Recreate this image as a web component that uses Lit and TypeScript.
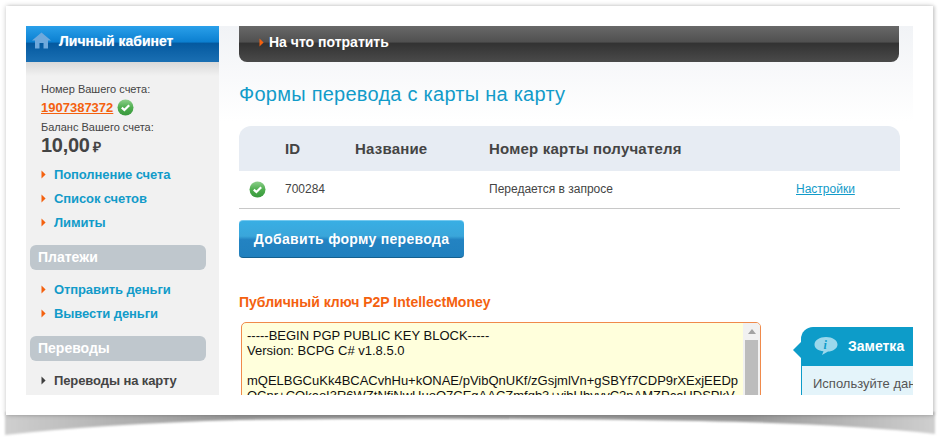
import { LitElement, html, css, svg } from "lit";
import { customElement } from "lit/decorators.js";

const check = () => html`<svg class="check" width="17" height="17" viewBox="0 0 17 17">
  <defs><linearGradient id="cg" x1="0" y1="0" x2="0" y2="1"><stop offset="0" stop-color="#8ccf8a"/><stop offset="0.5" stop-color="#4fae4f"/><stop offset="1" stop-color="#38983c"/></linearGradient></defs>
  <circle cx="8.5" cy="8.5" r="8" fill="url(#cg)"/>
  <path d="M4.8 8.6 L7.4 11 L12.2 6.3" fill="none" stroke="#fff" stroke-width="2.2"/>
</svg>`;

const arrow = (dark = false) => html`<svg class="arrow" width="5" height="9" viewBox="0 0 5 9"><path d="M0.5 0.5 L4.6 4.5 L0.5 8.5 Z" fill=${dark ? "#3f3f3f" : "#f4610f"}/></svg>`;

const KEY = `-----BEGIN PGP PUBLIC KEY BLOCK-----
Version: BCPG C# v1.8.5.0

mQELBGCuKk4BCACvhHu+kONAE/pVibQnUKf/zGsjmlVn+gSBYf7CDP9rXExjEEDp
OCnr+COkaoI3R6WZtNfiNwHuoO7CEgAACZmfqb3+vibUbyvyC2nAMZPcaUDSPkV`;

@customElement("app-root")
export class AppRoot extends LitElement {
  static styles = css`
    :host { display: block; position: relative; width: 947px; height: 444px; background: #fff; overflow: hidden;
      font-family: "Liberation Sans", Arial, sans-serif; color: #444; }
    .curl { position: absolute; left: 0; top: 0; }
    .card { position: relative; box-sizing: border-box; width: 927px; height: 409px; margin: 6px 0 0 6px; padding: 20px;
      background: #fff; box-shadow: 0 0 5px rgba(0,0,0,.22), 2px 0 3px rgba(0,0,0,.1); }
    .viewport { display: flex; height: 369px; overflow: hidden; }

    .side { width: 193px; flex: none; background: #f1f1f1; }
    .side-head { height: 36px; display: flex; align-items: center; gap: 8px; padding: 0 0 7px 6px; box-sizing: border-box;
      background: linear-gradient(#2aa0ea 0, #0b7fd0 45%, #04599f 47%, #1a6fb3 100%);
      color: #fff; font-weight: bold; font-size: 14px; text-shadow: 0 0 1px rgba(255,255,255,.5); }
    .side-head svg { flex: none; }
    .side-shadow { height: 14px; background: linear-gradient(#d9d9d9, #f1f1f1); }
    .acct { padding: 7px 0 0 15px; font-size: 11px; line-height: 13px; color: #444; }
    .acct-row { display: flex; align-items: center; gap: 4px; margin-top: 2px; height: 18px; }
    .acct-num { color: #f4610f; font-size: 13px; font-weight: bold; text-decoration: underline; }
    .bal-l { margin-top: 5px; }
    .bal { display: flex; align-items: baseline; gap: 3px; font-size: 20px; font-weight: bold; line-height: 23px; color: #444; letter-spacing: -.3px; }
    .bal small { font-size: 14px; letter-spacing: 0; }
    .menu { list-style: none; margin: 0; padding: 0 0 0 15px; font-size: 13px; font-weight: bold; letter-spacing: -0.1px; }
    .menu li { display: flex; align-items: center; height: 24px; gap: 8px; color: #129bc9; }
    .menu li.cur { color: #444; }
    .m1 { margin-top: 3px; }
    .group { margin: 11px 13px 0 4px; height: 25px; line-height: 25px; padding-left: 8px; background: #bfc7cd; border-radius: 6px;
      color: #fff; font-weight: bold; font-size: 14px; }
    .group + .menu { margin-top: 7px; }

    .main { flex: 1; min-width: 0; padding: 0 13px 0 20px; background: linear-gradient(#f1f3f6 0, #fff 95px); background-repeat: no-repeat; }
    .bar { height: 36px; width: 660px; box-sizing: border-box; padding-left: 20px; display: flex; align-items: center; gap: 5px; padding-bottom: 4px;
      border-radius: 0 0 8px 8px; color: #fff; font-weight: bold; font-size: 14px;
      background: linear-gradient(#686868 0, #505050 45%, #323232 47%, #4a4a4a 100%); }
    h1 { margin: 20px 0 0; font-weight: normal; font-size: 20px; line-height: 24px; color: #129bc9; letter-spacing: .25px; }
    table { margin-top: 20px; width: 661px; border-collapse: collapse; table-layout: fixed; }
    thead tr { height: 45px; }
    th { background: #e7ecf3; text-align: left; font-size: 15px; letter-spacing: .2px; font-weight: bold; color: #444; padding: 0; }
    th:first-child { border-top-left-radius: 12px; }
    th:last-child { border-top-right-radius: 12px; }
    tbody tr { height: 37px; border-bottom: 1px solid #c8c8c8; }
    td { font-size: 12px; padding: 0; color: #444; }
    td.st { padding-left: 10px; }
    td.st .check { display: block; }
    td.id { font-size: 12px; }
    a { color: #129bc9; text-decoration: underline; }
    .btn { display: flex; align-items: center; justify-content: center; margin-top: 11px; width: 225px; height: 38px; box-sizing: border-box;
      border-radius: 4px; color: #fff; font-weight: bold; font-size: 14px; letter-spacing: .3px; border-bottom: 1px solid #14608f; border-top: 1px solid #74c9ef;
      background: linear-gradient(#38aee4 0, #3aa6da 42%, #2383c2 52%, #2080be 100%); }
    .lbl { margin-top: 36px; color: #f4610f; font-weight: bold; font-size: 14px; line-height: 17px; }
    .row { display: flex; margin-top: 11px; padding-left: 2px; }
    .ta { position: relative; flex: none; width: 520px; height: 120px; box-sizing: border-box; border: 1px solid #f08a4b; border-radius: 5px;
      background: #ffffdc; padding: 5px 0 0 5px; font-size: 13px; line-height: 15px; color: #111; white-space: pre; overflow: hidden; }
    .sb { position: absolute; right: 0; top: 0; bottom: 0; width: 17px; background: #f1f1f1; }
    .sb i { display: block; width: 0; height: 0; margin: 6px auto 0; border: 4px solid transparent; border-top: 0; border-bottom: 5px solid #a3a3a3; }
    .sb b { position: absolute; left: 2px; right: 2px; top: 17px; height: 100px; background: #bcbcbc; }
    .note { position: relative; margin: 5px 0 0 40px; width: 112px; flex: none; }
    .note::before { content: ""; position: absolute; left: -8px; top: 15px; width: 0; height: 0; border: 8px solid transparent; border-left: 0; border-right-color: #0d9cc9; }
    .note-h { height: 39px; display: flex; align-items: center; gap: 10px; padding-left: 13px; background: #0d9cc9; border-top-left-radius: 12px;
      color: #fff; font-weight: bold; font-size: 14px; }
    .note-b { border-left: 1px solid #0d9cc9; background: #e4f4fa; padding: 10px 0 0 11px; font-size: 13px; line-height: 15px; color: #555; white-space: nowrap; overflow: hidden; height: 60px; }
  `;

  render() {
    return html`
      <svg class="curl" width="947" height="444" viewBox="0 0 947 444">
        <defs>
          <linearGradient id="sh" x1="0" y1="0" x2="1" y2="0">
            <stop offset="0" stop-color="#cfcfcf"/><stop offset=".12" stop-color="#b2b2b2"/><stop offset=".25" stop-color="#999"/>
            <stop offset=".8" stop-color="#999"/><stop offset=".9" stop-color="#b5b5b5"/><stop offset="1" stop-color="#cfcfcf"/>
          </linearGradient>
          <filter id="bl" x="-5%" y="-20%" width="110%" height="140%"><feGaussianBlur stdDeviation="1.1"/></filter>
        </defs>
        ${svg`<path d="M5 412 H935 V434 Q850 424 700 421 Q470 417 240 420 Q100 424 5 435 Z" fill="url(#sh)" filter="url(#bl)"/>`}
      </svg>
      <div class="card">
        <div class="viewport">
          <aside class="side">
            <div class="side-head">
              <svg width="19" height="17" viewBox="0 0 19 17"><path d="M9.5 0.5 L19 8.5 L16 8.5 L16 16.5 L11.5 16.5 L11.5 11 L7.5 11 L7.5 16.5 L3 16.5 L3 8.5 L0 8.5 Z" fill="#6fa9dc"/></svg>
              <span>Личный кабинет</span>
            </div>
            <div class="side-shadow"></div>
            <div class="acct">
              <div>Номер Вашего счета:</div>
              <div class="acct-row"><span class="acct-num">1907387372</span>${check()}</div>
              <div class="bal-l">Баланс Вашего счета:</div>
              <div class="bal"><span>10,00</span><small>₽</small></div>
            </div>
            <ul class="menu m1">
              <li>${arrow()}Пополнение счета</li>
              <li>${arrow()}Список счетов</li>
              <li>${arrow()}Лимиты</li>
            </ul>
            <div class="group">Платежи</div>
            <ul class="menu">
              <li>${arrow()}Отправить деньги</li>
              <li>${arrow()}Вывести деньги</li>
            </ul>
            <div class="group">Переводы</div>
            <ul class="menu">
              <li class="cur">${arrow(true)}Переводы на карту</li>
            </ul>
          </aside>
          <main class="main">
            <div class="bar">${arrow()}На что потратить</div>
            <h1>Формы перевода с карты на карту</h1>
            <table>
              <colgroup><col style="width:46px"/><col style="width:70px"/><col style="width:134px"/><col style="width:307px"/><col/></colgroup>
              <thead><tr><th></th><th>ID</th><th>Название</th><th>Номер карты получателя</th><th></th></tr></thead>
              <tbody><tr><td class="st">${check()}</td><td class="id">700284</td><td></td><td>Передается в запросе</td><td><a>Настройки</a></td></tr></tbody>
            </table>
            <div class="btn">Добавить форму перевода</div>
            <div class="lbl">Публичный ключ P2P IntellectMoney</div>
            <div class="row">
              <div class="ta">${KEY}<div class="sb"><i></i><b></b></div></div>
              <div class="note">
                <div class="note-h">
                  <svg width="24" height="20" viewBox="0 0 24 20"><path d="M12 1 C18.5 1 23.5 4.2 23.5 8.5 C23.5 12.8 18.5 15.5 14 15.5 L8 19 L9.5 15.3 C4.5 14.8 0.5 12.5 0.5 8.5 C0.5 4.2 5.5 1 12 1 Z" fill="#9bd8ec"/><text x="9.5" y="13" font-size="12" font-style="italic" font-weight="bold" font-family="Liberation Serif" fill="#0d9cc9">i</text></svg>
                  <span>Заметка</span>
                </div>
                <div class="note-b">Используйте данный ключ</div>
              </div>
            </div>
          </main>
        </div>
      </div>
    `;
  }
}
